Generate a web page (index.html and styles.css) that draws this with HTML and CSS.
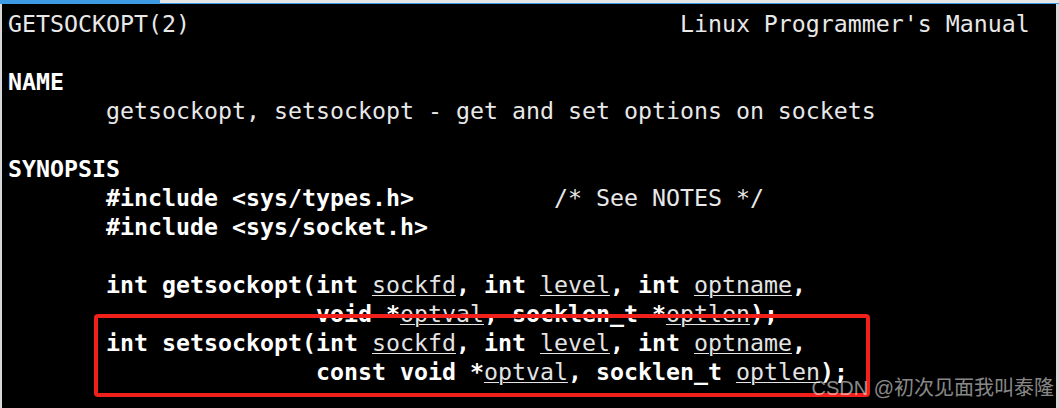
FILE: index.html
```html
<!DOCTYPE html>
<html lang="en">
<head>
<meta charset="utf-8">
<title>getsockopt(2)</title>
<link rel="stylesheet" href="styles.css">
</head>
<body>
<div class="window">
  <div class="topbar"><div class="tab"></div></div>
  <div class="term">
<pre class="man">GETSOCKOPT(2)                                   Linux Programmer's Manual

<span class="b">NAME</span>
       getsockopt, setsockopt - get and set options on sockets

<span class="b">SYNOPSIS</span>
       <span class="b">#include &lt;sys/types.h&gt;</span>          /* See NOTES */
       <span class="b">#include &lt;sys/socket.h&gt;</span>

       <span class="b">int getsockopt(int </span><span class="u">sockfd</span><span class="b">, int </span><span class="u">level</span><span class="b">, int </span><span class="u">optname</span><span class="b">,</span>
                      <span class="b">void *</span><span class="u">optval</span><span class="b">, socklen_t *</span><span class="u">optlen</span><span class="b">);</span>
       <span class="b">int setsockopt(int </span><span class="u">sockfd</span><span class="b">, int </span><span class="u">level</span><span class="b">, int </span><span class="u">optname</span><span class="b">,</span>
                      <span class="b">const void *</span><span class="u">optval</span><span class="b">, socklen_t </span><span class="u">optlen</span><span class="b">);</span></pre>
    <div class="highlight"></div>
    <div class="watermark">CSDN @初次见面我叫泰隆</div>
  </div>
</div>
</body>
</html>
```
FILE: styles.css
```css
html, body {
  margin: 0;
  padding: 0;
  background: #000;
}

.window {
  width: 1059px;
  height: 408px;
  overflow: hidden;
  display: flex;
  flex-direction: column;
  background: #000;
}

.topbar {
  height: 3px;
  background: #e6e6e6;
  border-bottom: 1px solid #3d9be6;
  display: flex;
}

.tab {
  width: 160px;
  height: 3px;
  background: #3d9be6;
}

.term {
  position: relative;
  flex: 1;
  border-left: 2px solid #d8d8d8;
  border-right: 3px solid #d8d8d8;
  background: #000;
}

.man {
  margin: 0;
  padding: 4.5px 0 0 6px;
  font-family: "DejaVu Sans Mono", monospace;
  font-size: 23.25px;
  line-height: 29px;
  color: #e8e8e8;
  white-space: pre;
}

.b {
  font-weight: bold;
  color: #ffffff;
}

.u {
  text-decoration: underline;
  text-decoration-thickness: 1px;
  text-underline-offset: 2px;
  color: #e4e4e4;
}

.highlight {
  position: absolute;
  left: 92px;
  top: 310px;
  width: 776px;
  height: 83px;
  box-sizing: border-box;
  border: 4px solid #f2201a;
  border-radius: 4px;
}

.watermark {
  position: absolute;
  right: 2px;
  top: 371px;
  font-family: "Liberation Sans", "Noto Sans CJK SC", sans-serif;
  font-size: 20px;
  line-height: 26px;
  color: rgba(255, 255, 255, 0.55);
  white-space: nowrap;
}
```
